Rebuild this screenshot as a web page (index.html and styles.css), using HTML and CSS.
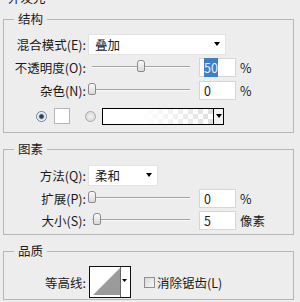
FILE: index.html
```html
<!DOCTYPE html>
<html lang="zh">

<head>
  <meta charset="utf-8">
  <title>外发光</title>

  <link rel="stylesheet" href="styles.css">
</head>

<body>
  <div class="title"><span>外发光</span></div>

  <fieldset class="grp g-struct">
    <legend>结构</legend>
    <div class="row h22">
      <label class="lbl">混合模式(E):</label>
      <div class="sel w-blend"><span>叠加</span><i class="arr"></i></div>
    </div>
    <div class="row h24">
      <label class="lbl">不透明度(O):</label>
      <div class="slider"><div class="track"></div><div class="thumb" style="left:49px"></div></div>
      <div class="num"><span class="hl">50</span></div>
      <span class="unit">%</span>
    </div>
    <div class="row h22">
      <label class="lbl">杂色(N):</label>
      <div class="slider"><div class="track"></div><div class="thumb" style="left:0px"></div></div>
      <div class="num">0</div>
      <span class="unit">%</span>
    </div>
    <div class="row h30 colors">
      <span class="radio on"></span>
      <span class="swatch"></span>
      <span class="radio off"></span>
      <div class="grad"><div class="fill"></div><div class="drop"><i class="arr"></i></div></div>
    </div>
  </fieldset>

  <fieldset class="grp g-elem">
    <legend>图素</legend>
    <div class="row h24">
      <label class="lbl">方法(Q):</label>
      <div class="sel w-method"><span>柔和</span><i class="arr"></i></div>
    </div>
    <div class="row h22">
      <label class="lbl">扩展(P):</label>
      <div class="slider"><div class="track"></div><div class="thumb" style="left:0px"></div></div>
      <div class="num">0</div>
      <span class="unit">%</span>
    </div>
    <div class="row h22">
      <label class="lbl">大小(S):</label>
      <div class="slider"><div class="track"></div><div class="thumb" style="left:5px"></div></div>
      <div class="num">5</div>
      <span class="unit">像素</span>
    </div>
  </fieldset>

  <fieldset class="grp g-quality">
    <legend>品质</legend>
    <div class="row h32">
      <label class="lbl">等高线:</label>
      <svg class="contour" width="42" height="32" viewBox="0 0 42 32">
        <rect x="0.5" y="0.5" width="41" height="31" fill="#fff" stroke="#111" />
        <polygon points="4,29 31,2 31,29" fill="#9b9b9b" />
        <line x1="31.5" y1="1" x2="31.5" y2="31" stroke="#666" />
        <polygon points="33,13 38,13 35.5,16" fill="#000" />
      </svg>
      <span class="check"></span>
      <span class="check-lbl">消除锯齿(L)</span>
    </div>
  </fieldset>
</body>

</html>
```

FILE: styles.css
```css
body {
  margin: 0;
  background: #ededed;
  color: #1a1a1a;
  font: 12.5px "Noto Sans CJK SC", "Liberation Sans", sans-serif;
  overflow: hidden;
}

.title {
  height: 11px;
  overflow: hidden;
  padding-left: 8px;
}

.title span {
  display: block;
  line-height: 14px;
  margin-top: -9px;
}

.grp {
  margin: 0 0 0 3px;
  width: 291px;
  box-sizing: border-box;
  border: 1px solid #b7b7b7;
  padding: 6px 0 1px 0;
  min-width: 0;
}

.grp + .grp {
  margin-top: 8px;
}

.grp legend {
  margin-left: 10px;
  padding: 0 4px;
  height: 16px;
  line-height: 16px;
}

.g-elem {
  padding-bottom: 3px;
}

.g-quality {
  padding-top: 7px;
}

.row {
  display: flex;
  align-items: center;
}

.h22 {
  height: 22px;
}

.h24 {
  height: 24px;
}

.h30 {
  height: 30px;
}

.h32 {
  height: 32px;
}

.lbl {
  width: 82px;
  text-align: right;
  white-space: nowrap;
}

.sel {
  margin-left: 2px;
  height: 21px;
  box-sizing: border-box;
  background: #fff;
  border: 1px solid #e3e3e3;
  display: flex;
  align-items: center;
  justify-content: space-between;
  padding: 0 5px 0 6px;
}

.w-blend {
  width: 138px;
}

.w-method {
  width: 70px;
}

.arr {
  display: block;
  width: 0;
  height: 0;
  border-left: 3px solid transparent;
  border-right: 3px solid transparent;
  border-top: 4px solid #000;
}

.slider {
  position: relative;
  margin-left: 2px;
  width: 106px;
  height: 14px;
}

.track {
  position: absolute;
  left: 4px;
  right: 4px;
  top: 6px;
  border-top: 1px solid #a3a3a3;
  border-bottom: 1px solid #fafafa;
}

.thumb {
  position: absolute;
  top: 0;
  width: 8px;
  height: 12px;
  box-sizing: border-box;
  border: 1px solid #8a8a8a;
  border-radius: 3px 3px 2px 2px;
  background: linear-gradient(#fbfbfb, #d9d9d9);
}

.num {
  margin-left: 5px;
  width: 37px;
  height: 19px;
  box-sizing: border-box;
  background: #fff;
  border: 1px solid #d6d6d6;
  padding-left: 4px;
  line-height: 17px;
}

.hl {
  background: #3f7fc6;
  color: #eaf1fa;
}

.unit {
  margin-left: 4px;
}

.colors .radio.on {
  margin-left: 32px;
}

.radio {
  width: 11px;
  height: 11px;
  box-sizing: border-box;
  border-radius: 50%;
}

.radio.on {
  border: 1px solid #6d8196;
  background: radial-gradient(circle, #24333f 0, #34495c 1.8px, #c6d3df 2.8px, #f4f7fa 4px);
}

.radio.off {
  margin-left: 15px;
  border: 1px solid #a9a9a9;
  background: radial-gradient(circle, #f3f3f3 0, #dadada 4.5px);
}

.swatch {
  margin-left: 7px;
  width: 16px;
  height: 16px;
  box-sizing: border-box;
  border: 1px solid #b5b5b5;
  background: #fff;
}

.grad {
  margin-left: 6px;
  width: 122px;
  height: 17px;
  box-sizing: border-box;
  border: 1px solid #000;
  display: flex;
}

.grad .fill {
  flex: 1;
  background:
    linear-gradient(to right, #fff 35%, rgba(255, 255, 255, 0.25)),
    conic-gradient(#d4d4d4 25%, #fff 0 50%, #d4d4d4 0 75%, #fff 0) 0 0 / 10px 10px;
}

.grad .drop {
  width: 10px;
  box-sizing: border-box;
  border-left: 1px solid #000;
  background: #f2f2f2;
  display: flex;
  align-items: center;
  justify-content: center;
}

.contour {
  margin-left: 3px;
  display: block;
}

.check {
  margin-left: 13px;
  width: 11px;
  height: 11px;
  box-sizing: border-box;
  border: 1px solid #8f8f8f;
  background: linear-gradient(135deg, #d8d8d8, #f8f8f8);
}

.check-lbl {
  margin-left: 2px;
}
```
